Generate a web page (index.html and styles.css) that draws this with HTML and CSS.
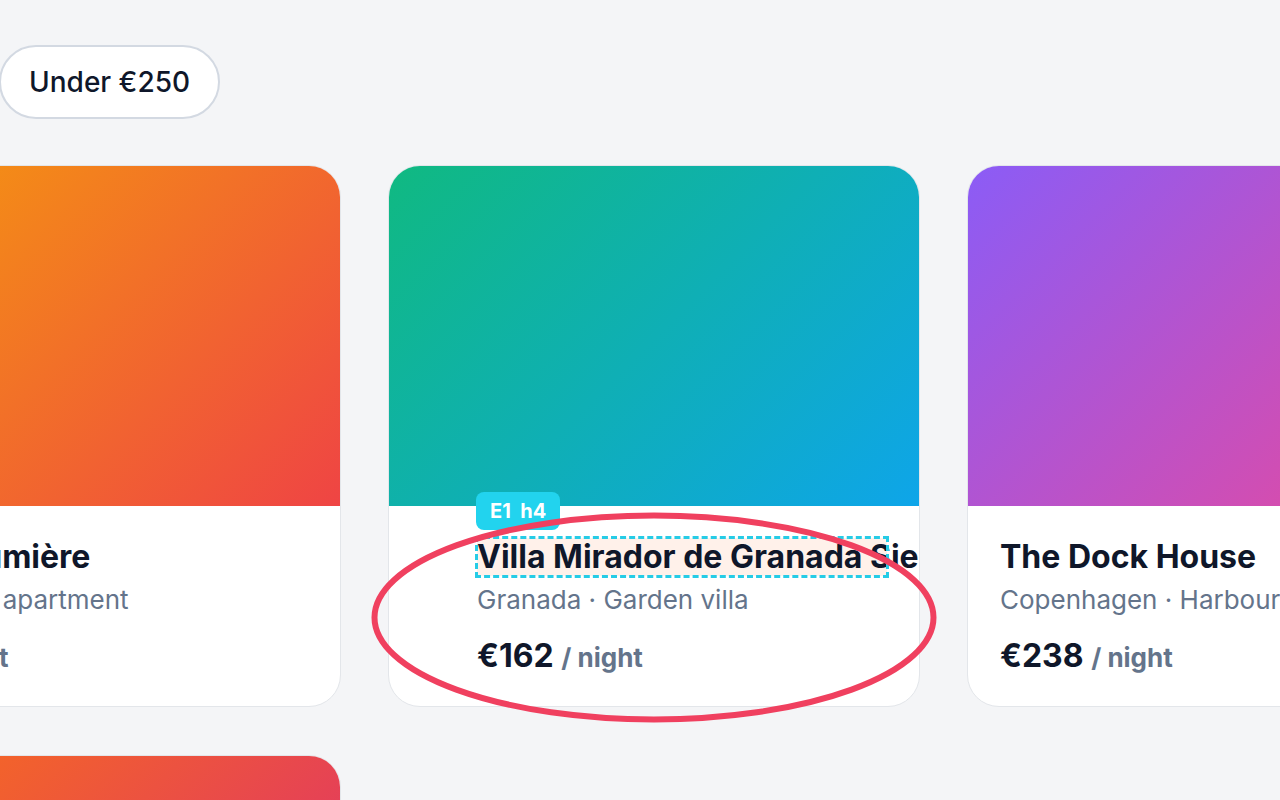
FILE: index.html
```html
<!DOCTYPE html>
<html lang="en">
<head>
<meta charset="utf-8">
<title>Stays</title>
<link rel="stylesheet" href="styles.css">
</head>
<body>
<div class="page">
  <div class="filters">
    <button class="pill">Under €250</button>
  </div>
  <div class="grid">
    <article class="card">
      <div class="cover cover-sunset"></div>
      <div class="body">
        <h4 class="title">Maison Lumière</h4>
        <p class="meta">Paris · Canal apartment</p>
        <p class="price">€189 <span class="unit">/ night</span></p>
      </div>
    </article>
    <article class="card">
      <div class="cover cover-sea"></div>
      <div class="body body-shifted">
        <h4 class="title title-flagged"><span class="flag">E1&nbsp;&nbsp;h4</span>Villa Mirador de Granada Sierra Nevada</h4>
        <p class="meta">Granada · Garden villa</p>
        <p class="price">€162 <span class="unit">/ night</span></p>
      </div>
    </article>
    <article class="card">
      <div class="cover cover-violet"></div>
      <div class="body">
        <h4 class="title">The Dock House</h4>
        <p class="meta">Copenhagen · Harbour loft</p>
        <p class="price">€238 <span class="unit">/ night</span></p>
      </div>
    </article>
    <article class="card">
      <div class="cover cover-ember"></div>
      <div class="body">
        <h4 class="title">Casa Azul</h4>
        <p class="meta">Lisbon · Townhouse</p>
        <p class="price">€144 <span class="unit">/ night</span></p>
      </div>
    </article>
  </div>
  <svg class="annotation" width="1280" height="800" viewBox="0 0 1280 800" aria-hidden="true">
    <ellipse cx="654" cy="617.5" rx="279.5" ry="102" fill="none" stroke="#f0405f" stroke-width="6"/>
  </svg>
</div>
</body>
</html>
```

FILE: styles.css
```css
html, body {
  margin: 0;
  padding: 0;
  height: 100%;
  overflow: hidden;
  background: #f4f5f7;
}

body {
  font-family: Inter, "Noto Sans", "Liberation Sans", sans-serif;
  color: #0f172a;
}

.page {
  position: relative;
  width: 1280px;
  height: 800px;
  overflow: hidden;
}

.filters {
  display: flex;
  gap: 16px;
  padding-top: 45px;
  height: 74px;
  margin-left: -1px;
}

.pill {
  box-sizing: border-box;
  height: 74px;
  padding: 0 28px;
  border: 2px solid #d3d9e2;
  border-radius: 999px;
  background: #ffffff;
  font-family: inherit;
  font-size: 28px;
  font-weight: 500;
  color: #0f172a;
  white-space: nowrap;
}

.grid {
  display: grid;
  grid-template-columns: repeat(3, 532px);
  column-gap: 47px;
  row-gap: 48px;
  margin-top: 46px;
  margin-left: -191px;
  width: 1690px;
}

.card {
  box-sizing: border-box;
  height: 542px;
  background: #ffffff;
  border: 1px solid #e3e6ea;
  border-radius: 32px;
  overflow: hidden;
  display: flex;
  flex-direction: column;
}

.cover {
  height: 340px;
  flex: none;
}

.cover-sunset { background: linear-gradient(135deg, #f59e0b, #ef4444); }
.cover-sea { background: linear-gradient(135deg, #10b981, #0ea5e9); }
.cover-violet { background: linear-gradient(135deg, #8b5cf6, #ec4899); }
.cover-ember { background: linear-gradient(135deg, #f97316, #db2777); }

.body {
  padding: 32px;
  min-width: 0;
}

.body-shifted {
  padding-left: 88px;
}

.title {
  position: relative;
  margin: 0;
  font-size: 32px;
  font-weight: 700;
  line-height: 38px;
  white-space: nowrap;
}

.title-flagged {
  background: #fff1ea;
  outline: 3px dashed #26cce6;
  outline-offset: -1px;
}

.flag {
  position: absolute;
  left: -1px;
  top: -46px;
  height: 38px;
  padding: 0 14px;
  border-radius: 8px;
  background: #22d3ee;
  color: #ffffff;
  font-size: 20px;
  font-weight: 700;
  line-height: 38px;
}

.meta {
  margin: 7px 0 0;
  font-size: 26px;
  line-height: 34px;
  color: #64748b;
  white-space: nowrap;
}

.price {
  margin: 20px 0 0;
  font-size: 32px;
  font-weight: 700;
  line-height: 38px;
  color: #0f172a;
  white-space: nowrap;
}

.unit {
  font-size: 26px;
  color: #64748b;
}

.annotation {
  position: absolute;
  left: 0;
  top: 0;
  pointer-events: none;
}
```
